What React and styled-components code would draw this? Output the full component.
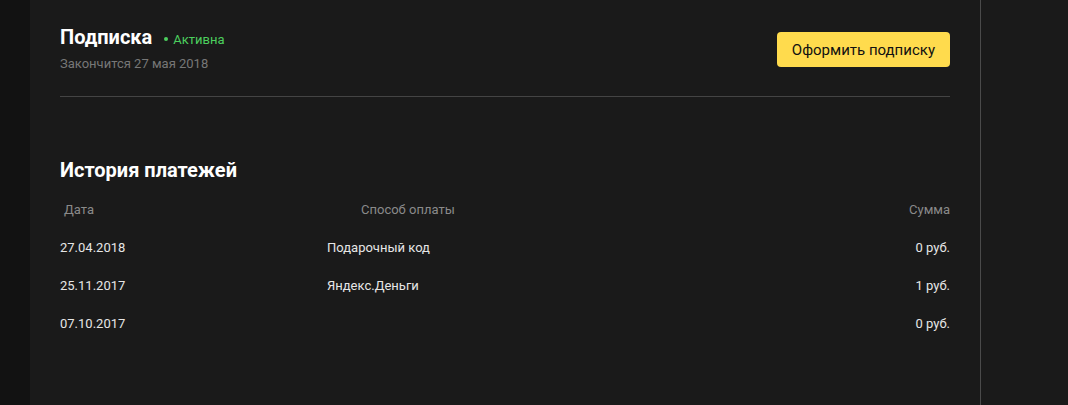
import React from "react";
import styled, { createGlobalStyle } from "styled-components";

const GlobalStyle = createGlobalStyle`
  html, body {
    margin: 0;
    padding: 0;
    background: #1a1a1a;
    font-family: Roboto, "Noto Sans", Arial, sans-serif;
    -webkit-font-smoothing: antialiased;
  }
`;

const payments = [
  { date: "27.04.2018", method: "Подарочный код", sum: "0 руб." },
  { date: "25.11.2017", method: "Яндекс.Деньги", sum: "1 руб." },
  { date: "07.10.2017", method: "", sum: "0 руб." },
];

const App = () => {
  return (
    <>
      <GlobalStyle />
      <Page>
        <SideStrip />
        <Main>
          <SubscriptionBar>
            <div>
              <TitleRow>
                <Title>Подписка</Title>
                <Status>Активна</Status>
              </TitleRow>
              <Expires>Закончится 27 мая 2018</Expires>
            </div>
            <YellowButton>Оформить подписку</YellowButton>
          </SubscriptionBar>
          <Divider />
          <HistoryTitle>История платежей</HistoryTitle>
          <Table>
            <HeadRow>
              <HeadCell $pad="4px">Дата</HeadCell>
              <HeadCell $pad="34px">Способ оплаты</HeadCell>
              <HeadCell $right>Сумма</HeadCell>
            </HeadRow>
            {payments.map((p) => (
              <Row key={p.date}>
                <Cell>{p.date}</Cell>
                <Cell>{p.method}</Cell>
                <Cell $right>{p.sum}</Cell>
              </Row>
            ))}
          </Table>
        </Main>
        <Aside />
      </Page>
    </>
  );
};

export default App;

const Page = styled.div`
  display: flex;
  min-height: 405px;
`;
const SideStrip = styled.div`
  width: 30px;
  flex-shrink: 0;
  background: #121212;
`;
const Main = styled.main`
  width: 890px;
  flex-shrink: 0;
  padding: 0 30px;
  border-right: 1px solid #4a4a4a;
  background: #1a1a1a;
`;
const Aside = styled.div`
  flex: 1;
  background: #1a1a1a;
`;
const SubscriptionBar = styled.div`
  display: flex;
  justify-content: space-between;
  align-items: flex-start;
  padding-top: 25px;
  padding-bottom: 25px;
`;
const TitleRow = styled.div`
  display: flex;
  align-items: baseline;
  gap: 12px;
`;
const Title = styled.h2`
  margin: 0;
  font-size: 20px;
  line-height: 24px;
  font-weight: 700;
  color: #fff;
`;
const Status = styled.span`
  font-size: 13px;
  color: #4ccf5e;
  &::before {
    content: "";
    display: inline-block;
    width: 4px;
    height: 4px;
    border-radius: 50%;
    background: #4ccf5e;
    margin-right: 5px;
    vertical-align: 3px;
  }
`;
const Expires = styled.div`
  margin-top: 7px;
  font-size: 13px;
  color: #777;
`;
const YellowButton = styled.button`
  margin-top: 7px;
  height: 35px;
  padding: 0 15px;
  border: none;
  border-radius: 4px;
  background: #ffdb4d;
  color: #111;
  font-family: inherit;
  font-size: 15px;
  cursor: pointer;
`;
const Divider = styled.hr`
  margin: 0;
  border: none;
  border-top: 1px solid #444;
`;
const HistoryTitle = styled.h2`
  margin: 61px 0 0;
  font-size: 20px;
  line-height: 24px;
  font-weight: 700;
  color: #fff;
`;
const Table = styled.div`
  margin-top: 8px;
  display: flex;
  flex-direction: column;
`;
const HeadRow = styled.div`
  display: grid;
  grid-template-columns: 267px 1fr auto;
  height: 38px;
  align-items: center;
`;
const Row = styled(HeadRow)``;
const HeadCell = styled.div`
  font-size: 13px;
  color: #8a8a8a;
  padding-left: ${(p) => p.$pad || 0};
  text-align: ${(p) => (p.$right ? "right" : "left")};
`;
const Cell = styled.div`
  font-size: 13px;
  color: #e6e6e6;
  text-align: ${(p) => (p.$right ? "right" : "left")};
`;
